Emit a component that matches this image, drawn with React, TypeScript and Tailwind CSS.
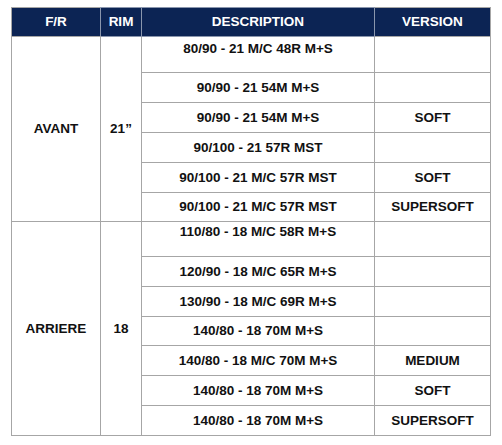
import React from 'react';

// ============================================================================
// DATA
// ============================================================================

interface TyreRow {
  desc: string;
  version: string;
  h: string;
  top?: string;
}

const front: TyreRow[] = [
  { desc: '80/90 - 21 M/C 48R M+S', version: '', h: 'h-[36px]', top: 'pt-[4px]' },
  { desc: '90/90 - 21 54M M+S', version: '', h: 'h-[30px]' },
  { desc: '90/90 - 21 54M M+S', version: 'SOFT', h: 'h-[30px]' },
  { desc: '90/100 - 21 57R MST', version: '', h: 'h-[30px]' },
  { desc: '90/100 - 21 M/C 57R MST', version: 'SOFT', h: 'h-[30px]' },
  { desc: '90/100 - 21 M/C 57R MST', version: 'SUPERSOFT', h: 'h-[29px]' },
];

const rear: TyreRow[] = [
  { desc: '110/80 - 18 M/C 58R M+S', version: '', h: 'h-[35px]', top: 'pt-[2px]' },
  { desc: '120/90 - 18 M/C 65R M+S', version: '', h: 'h-[30px]' },
  { desc: '130/90 - 18 M/C 69R M+S', version: '', h: 'h-[30px]' },
  { desc: '140/80 - 18 70M M+S', version: '', h: 'h-[29px]' },
  { desc: '140/80 - 18 M/C 70M M+S', version: 'MEDIUM', h: 'h-[30px]' },
  { desc: '140/80 - 18 70M M+S', version: 'SOFT', h: 'h-[30px]' },
  { desc: '140/80 - 18 70M M+S', version: 'SUPERSOFT', h: 'h-[30px]' },
];

const cell = 'border border-[#a6a6a6] p-0 text-center';

function Group({ label, rim, rows }: { label: string; rim: string; rows: TyreRow[] }) {
  return (
    <>
      {rows.map((r, i) => (
        <tr key={i} className={r.h}>
          {i === 0 && (
            <>
              <td rowSpan={rows.length} className={`${cell} align-middle`}>{label}</td>
              <td rowSpan={rows.length} className={`${cell} align-middle`}>{rim}</td>
            </>
          )}
          <td className={`${cell} ${r.top ? `align-top ${r.top}` : 'align-middle'}`}>{r.desc}</td>
          <td className={`${cell} ${r.top ? `align-top ${r.top}` : 'align-middle'}`}>{r.version}</td>
        </tr>
      ))}
    </>
  );
}

export default function App() {
  return (
    <div className="w-[502px] h-[445px] bg-white pt-[7px] pl-[11px]">
      <table
        className="table-fixed border-collapse w-[479px] text-[13.5px] leading-[16px] font-bold text-[#111]"
        style={{ fontFamily: '"Liberation Sans", Arial, sans-serif' }}
      >
        <colgroup>
          <col className="w-[89px]" />
          <col className="w-[41px]" />
          <col className="w-[233px]" />
          <col className="w-[116px]" />
        </colgroup>
        <thead>
          <tr className="h-[29px] bg-[#0c2454] text-white">
            <th className="border border-[#a6a6a6] border-r-[#8a96ad] p-0 text-center align-middle">F/R</th>
            <th className="border border-[#8a96ad] p-0 text-center align-middle">RIM</th>
            <th className="border border-[#8a96ad] p-0 text-center align-middle">DESCRIPTION</th>
            <th className="border border-[#a6a6a6] border-l-[#8a96ad] p-0 text-center align-middle">VERSION</th>
          </tr>
        </thead>
        <tbody>
          <Group label="AVANT" rim="21”" rows={front} />
          <Group label="ARRIERE" rim="18" rows={rear} />
        </tbody>
      </table>
    </div>
  );
}
